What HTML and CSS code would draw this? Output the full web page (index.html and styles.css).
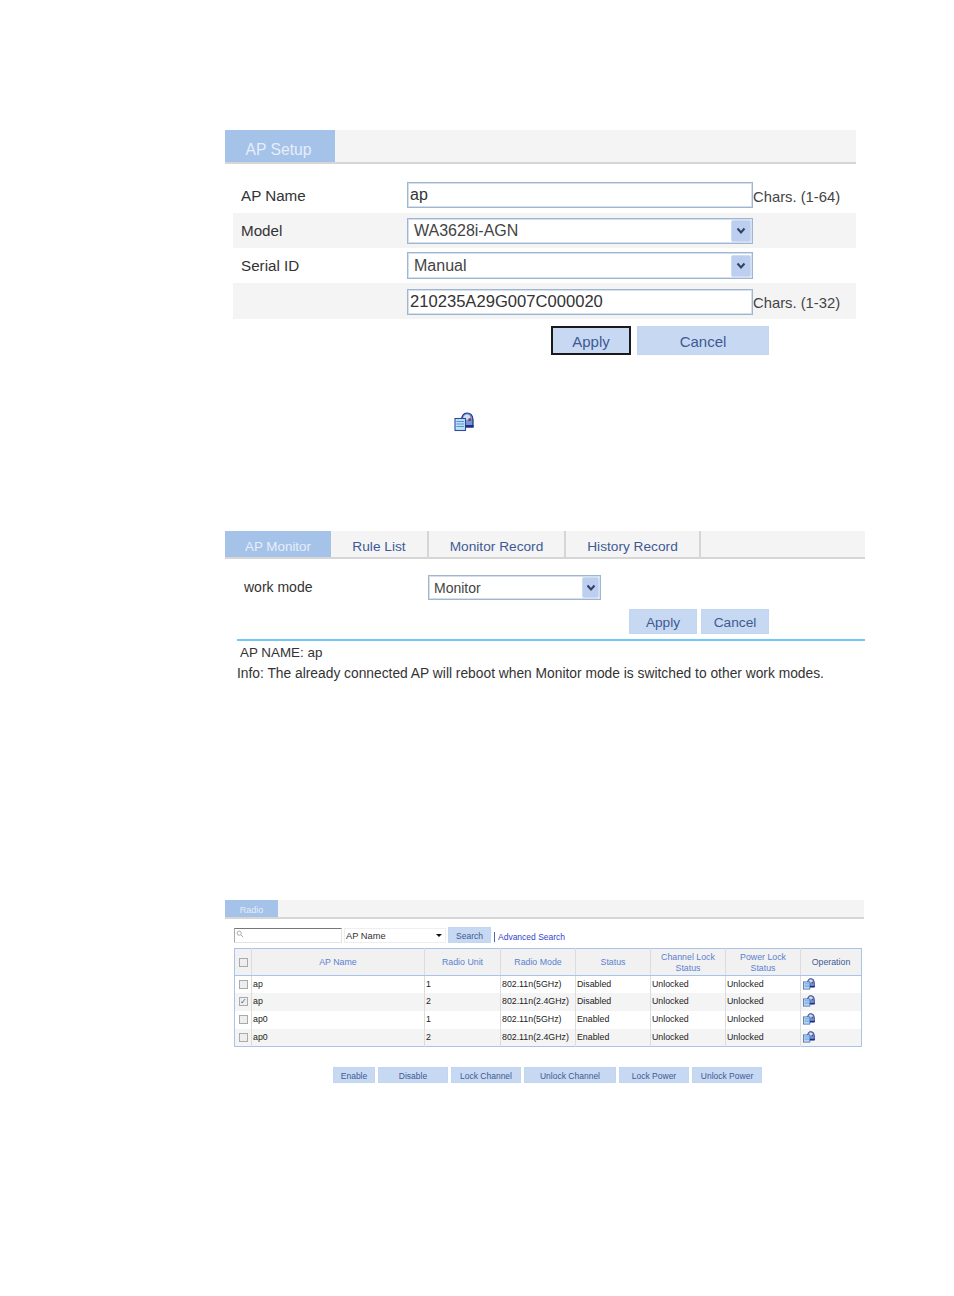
FILE: index.html
```html
<!DOCTYPE html>
<html lang="en">
<head>
<meta charset="utf-8">
<title>AP Setup</title>
<link rel="stylesheet" href="styles.css">
</head>
<body>
<svg class="defs" width="0" height="0" aria-hidden="true">
  <symbol id="op" viewBox="0 0 20 20">
    <path d="M7.500 8Q8 1 13 1Q18.500 1 19 7.500V15H7.500z" fill="#6f97d4" stroke="#1c2f8c" stroke-width="1.200"/>
    <path d="M9 7Q9.500 2.500 13 2.500Q15.500 2.500 16.500 5.500L13 8z" fill="#d3deef"/>
    <rect x="14.500" y="6.500" width="2.500" height="2.500" fill="#a82a4c"/>
    <rect x="1" y="6.500" width="10.500" height="12" fill="#c4ddf4" stroke="#2a4fa0" stroke-width="1.100"/>
    <path d="M2.500 9.500h7.500M2.500 12h7.500M2.500 14.500h7.500" stroke="#4a9ad8" stroke-width="1.100"/>
    <path d="M11.500 13h8v2.500h-8z" fill="#1c2f8c"/>
  </symbol>
</svg>

<main class="page">
  <section class="setup">
    <div class="tabbar tabbar-lg">
      <div class="tab active">AP Setup</div>
    </div>
    <div class="form">
      <div class="frow">
        <label class="flabel">AP Name</label>
        <input class="field up" value="ap">
        <span class="hint">Chars. (1-64)</span>
      </div>
      <div class="frow shade">
        <label class="flabel">Model</label>
        <div class="field sel"><span>WA3628i-AGN</span><i class="arrow"><svg viewBox="0 0 10 8"><path d="M1.500 1.500 5 5.500l3.500-4" fill="none" stroke="#33415f" stroke-width="2"/></svg></i></div>
      </div>
      <div class="frow">
        <label class="flabel">Serial ID</label>
        <div class="field sel taller"><span>Manual</span><i class="arrow"><svg viewBox="0 0 10 8"><path d="M1.500 1.500 5 5.500l3.500-4" fill="none" stroke="#33415f" stroke-width="2"/></svg></i></div>
      </div>
      <div class="frow shade tall">
        <label class="flabel"></label>
        <input class="field down serial" value="210235A29G007C000020">
        <span class="hint">Chars. (1-32)</span>
      </div>
      <div class="actions">
        <button class="btn focus">Apply</button>
        <button class="btn wide">Cancel</button>
      </div>
    </div>
  </section>

  <div class="loose-icon"><svg class="icon-lg"><use href="#op"/></svg></div>

  <section class="monitor">
    <div class="tabbar tabbar-md">
      <div class="tab active">AP Monitor</div>
      <div class="tab t1">Rule List</div>
      <div class="tab t2">Monitor Record</div>
      <div class="tab t3">History Record</div>
    </div>
    <div class="mode">
      <span class="mode-label">work mode</span>
      <div class="field sel sel-md"><span>Monitor</span><i class="arrow"><svg viewBox="0 0 10 8"><path d="M1.500 1.500 5 5.500l3.500-4" fill="none" stroke="#33415f" stroke-width="2"/></svg></i></div>
    </div>
    <div class="actions-md">
      <button class="btn">Apply</button>
      <button class="btn">Cancel</button>
    </div>
    <div class="info">
      <p class="apname">AP NAME: ap</p>
      <p class="note">Info: The already connected AP will reboot when Monitor mode is switched to other work modes.</p>
    </div>
  </section>

  <section class="radio">
    <div class="tabbar tabbar-sm">
      <div class="tab active">Radio</div>
    </div>
    <div class="searchbar">
      <div class="search"><svg viewBox="0 0 10 10"><circle cx="4" cy="4" r="2.600" fill="none" stroke="#999"/><path d="M6 6l3 3" stroke="#999"/></svg></div>
      <div class="combo"><span>AP Name</span><b></b></div>
      <button class="btn search-btn">Search</button>
      <a class="adv">Advanced Search</a>
    </div>
    <table class="grid">
      <colgroup>
        <col class="c0"><col class="c1"><col class="c2"><col class="c3"><col class="c4"><col class="c5"><col class="c6"><col class="c7">
      </colgroup>
      <thead>
        <tr>
          <th><i class="cb"></i></th>
          <th>AP Name</th><th>Radio Unit</th><th>Radio Mode</th><th>Status</th>
          <th>Channel Lock<br>Status</th><th>Power Lock<br>Status</th><th class="dark">Operation</th>
        </tr>
      </thead>
      <tbody>
        <tr><td><i class="cb"></i></td><td>ap</td><td>1</td><td>802.11n(5GHz)</td><td>Disabled</td><td>Unlocked</td><td>Unlocked</td><td><svg class="icon-sm"><use href="#op"/></svg></td></tr>
        <tr><td><i class="cb on">✓</i></td><td>ap</td><td>2</td><td>802.11n(2.4GHz)</td><td>Disabled</td><td>Unlocked</td><td>Unlocked</td><td><svg class="icon-sm"><use href="#op"/></svg></td></tr>
        <tr><td><i class="cb"></i></td><td>ap0</td><td>1</td><td>802.11n(5GHz)</td><td>Enabled</td><td>Unlocked</td><td>Unlocked</td><td><svg class="icon-sm"><use href="#op"/></svg></td></tr>
        <tr><td><i class="cb"></i></td><td>ap0</td><td>2</td><td>802.11n(2.4GHz)</td><td>Enabled</td><td>Unlocked</td><td>Unlocked</td><td><svg class="icon-sm"><use href="#op"/></svg></td></tr>
      </tbody>
    </table>
    <div class="actions-sm">
      <button class="btn b-enable">Enable</button>
      <button class="btn b-70">Disable</button>
      <button class="btn b-70">Lock Channel</button>
      <button class="btn b-unlock">Unlock Channel</button>
      <button class="btn b-70">Lock Power</button>
      <button class="btn b-70">Unlock Power</button>
    </div>
  </section>
</main>
</body>
</html>
```
FILE: styles.css
```css
* { box-sizing: border-box; }
html, body { margin: 0; padding: 0; background: #fff; }
body { font-family: "Liberation Sans", Arial, sans-serif; color: #333; height: 1296px; overflow: hidden; }
.defs { display: block; height: 0; }
p { margin: 0; }
.page { padding: 130px 0 0 225px; width: 954px; }

.tabbar { display: flex; background: #f4f4f4; border-bottom: 2px solid #d6d6d6; }
.tab { display: flex; align-items: center; justify-content: center; color: #3e5a94; padding-top: 2px; }
.tab.active { background: #a5c2e9; color: #e6eefa; }

.btn { border: 1px solid #c3d6f1; background: #c7d8f2; color: #3e5a94; font-family: inherit; padding: 2px 0 0; margin: 0; }
.btn.focus { border: 2px solid #1a1a1a; }

/* AP Setup */
.setup { width: 631px; }
.tabbar-lg { height: 34px; font-size: 15.700px; }
.tabbar-lg .tab { width: 110px; padding: 8px 3px 0 0; }
.form { padding: 14px 0 0 8px; }
.frow { display: flex; align-items: center; height: 35px; font-size: 15.200px; }
.frow.shade { background: #f4f4f4; }
.frow.tall { height: 36px; }
.flabel { width: 174px; padding-left: 8px; flex: none; color: #333; }
.field { width: 346px; height: 26px; border: 1px solid #9fb6d0; background: #fff; font: inherit; font-size: 16px; color: #333; padding: 0 2px; flex: none; outline: none; box-shadow: inset 0 0 0 1px #d6e0ec; }
.field.up { margin-bottom: 2px; }
.field.down { margin-top: 1px; }
.field.serial { font-size: 16.600px; }
.field.taller { height: 27px; }
.hint { font-size: 14.800px; padding: 3px 0 0 0; color: #444; white-space: nowrap; }
.sel { display: flex; align-items: center; justify-content: space-between; padding: 0 1px 0 6px; color: #444; }
.arrow { display: flex; align-items: center; justify-content: center; width: 20px; height: 22px; background: #bccff1; border: 1px solid #cddcf5; border-radius: 2px; }
.arrow svg { width: 10px; height: 8px; }
.actions { display: flex; gap: 6px; padding: 7px 0 0 318px; }
.actions .btn { width: 80px; height: 29px; font-size: 15px; }
.actions .btn.wide { width: 132px; }

.loose-icon { padding: 58px 0 0 229px; height: 176px; }
.icon-lg { display: block; width: 20px; height: 20px; margin-top: -1px; }

/* AP Monitor */
.monitor { width: 640px; }
.tabbar-md { height: 28px; font-size: 13.700px; }
.tabbar-md .tab { border-right: 2px solid #d6d6d6; padding-top: 4px; }
.tabbar-md .tab.active { width: 106px; border-right: 0; font-size: 13.400px; }
.t1 { width: 98px; }
.t2 { width: 137px; }
.t3 { width: 135px; }
.mode { display: flex; align-items: center; height: 25px; margin-top: 16px; font-size: 14px; }
.mode-label { width: 203px; padding: 0 0 2px 19px; color: #333; }
.field.sel-md { width: 173px; height: 25px; font-size: 14px; padding-left: 5px; }
.sel-md .arrow { width: 17px; height: 21px; }
.actions-md { display: flex; justify-content: flex-end; gap: 4px; padding: 9px 96px 0 0; }
.actions-md .btn { width: 68px; height: 25px; font-size: 13.700px; }
.info { margin: 5px 0 0 12px; border-top: 2px solid #72c8f9; font-size: 13.800px; }
.apname { padding: 3px 0 0 3px; line-height: 17px; font-size: 13.400px; }
.note { padding-top: 4px; line-height: 17px; white-space: nowrap; }

/* Radio */
.radio { margin-top: 218px; width: 639px; }
.tabbar-sm { height: 19px; font-size: 9px; }
.tabbar-sm .tab { width: 53px; }
.searchbar { display: flex; align-items: flex-start; height: 29px; padding: 8px 0 0 9px; font-size: 9.300px; }
.search { width: 108px; height: 15px; margin-top: 1px; border: 1px solid #e4e4e4; border-top: 1px solid #777; border-left: 1px solid #aaa; padding: 1px; }
.search svg { display: block; width: 8px; height: 8px; }
.combo { display: flex; align-items: center; justify-content: space-between; width: 102px; height: 15px; margin: 1px 0 0 2px; border: 1px solid #eee; padding: 0 3px 0 1px; color: #333; }
.combo b { width: 0; height: 0; border: 3px solid transparent; border-top: 3px solid #111; border-bottom: 0; }
.search-btn { width: 43px; height: 16px; margin-left: 2px; font-size: 8.500px; padding: 1px 0 0; }
.adv { margin: 5px 0 0 3px; padding-left: 3px; border-left: 1px solid #4b6aa8; line-height: 10px; color: #3344cc; font-size: 8.500px; }

.grid { border-collapse: collapse; table-layout: fixed; width: 627px; margin-left: 9px; font-size: 8.800px; border: 1px solid #a9c4e8; }
.c0 { width: 17px; }
.c1 { width: 173px; }
.c2 { width: 76px; }
.c3 { width: 75px; }
.c4 { width: 75px; }
.c5 { width: 75px; }
.c6 { width: 75px; }
.c7 { width: 61px; }
.grid th { height: 27px; background: #f1f1f1; font-weight: normal; color: #5a7fd0; border-bottom: 1px solid #a9c4e8; border-right: 1px solid #dcdcdc; padding: 1px 0 0; line-height: 10.500px; }
.grid th.dark { color: #3e5a94; }
.grid td { height: 17.800px; padding: 0 0 2px 1px; color: #222; border-right: 1px solid #dcdcdc; white-space: nowrap; line-height: 10px; }
.grid tbody tr:nth-child(even) td { background: #f4f4f4; }
.grid th:last-child, .grid td:last-child { border-right: 0; }
.grid td:first-child { padding: 0 0 2px; text-align: center; }
.grid th:first-child { text-align: center; }
.cb { display: inline-block; width: 9px; height: 9px; border: 1px solid #aaa; background: #eee; vertical-align: middle; font-style: normal; font-size: 8px; line-height: 7px; color: #3b5fa8; text-align: center; }
.icon-sm { display: block; width: 12px; height: 12px; margin: 0 0 0 1px; }

.actions-sm { display: flex; gap: 3px; padding: 20px 0 0 108px; }
.actions-sm .btn { height: 16px; font-size: 8.500px; padding: 2px 0 0; }
.b-enable { width: 42px; }
.b-70 { width: 70px; }
.b-unlock { width: 92px; }
```
